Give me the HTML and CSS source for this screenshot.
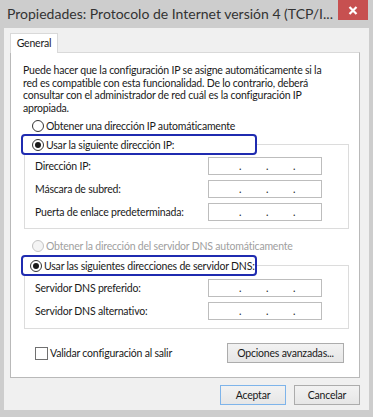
FILE: index.html
```html
<!DOCTYPE html>
<html lang="es">
<head>
    <meta charset="UTF-8">
    <title>Propiedades: Protocolo de Internet versión 4 (TCP/IPv4)</title>
    <link rel="stylesheet" href="styles.css">
</head>
<body>
    <div class="window">
        <div class="titlebar">
            <span class="title">Propiedades: Protocolo de Internet versión 4 (TCP/I...</span>
            <button class="close" title="Cerrar">
                <svg width="10" height="9" viewBox="0 0 10 9">
                    <path d="M1.5 1 L8.5 8 M8.5 1 L1.5 8" stroke="#fff" stroke-width="2.2" fill="none"/>
                </svg>
            </button>
        </div>

        <div class="client">
            <div class="tabs">
                <span class="tab">General</span>
            </div>

            <div class="panel">
                <p class="intro">
                    Puede hacer que la configuración IP se asigne automáticamente si la<br>
                    red es compatible con esta funcionalidad. De lo contrario, deberá<br>
                    consultar con el administrador de red cuál es la configuración IP<br>
                    apropiada.
                </p>

                <label class="option first"><span class="radio"></span>Obtener una dirección IP automáticamente</label>

                <fieldset class="group">
                    <legend class="option focus"><span class="radio checked"></span>Usar la siguiente dirección IP:</legend>
                    <div class="field">
                        <span>Dirección IP:</span>
                        <span class="ip"><i>.</i><i>.</i><i>.</i></span>
                    </div>
                    <div class="field">
                        <span>Máscara de subred:</span>
                        <span class="ip"><i>.</i><i>.</i><i>.</i></span>
                    </div>
                    <div class="field">
                        <span>Puerta de enlace predeterminada:</span>
                        <span class="ip"><i>.</i><i>.</i><i>.</i></span>
                    </div>
                </fieldset>

                <label class="option dns-auto disabled"><span class="radio"></span>Obtener la dirección del servidor DNS automáticamente</label>

                <fieldset class="group dns">
                    <legend class="option focus"><span class="radio checked"></span>Usar las siguientes direcciones de servidor DNS:</legend>
                    <div class="field">
                        <span>Servidor DNS preferido:</span>
                        <span class="ip"><i>.</i><i>.</i><i>.</i></span>
                    </div>
                    <div class="field">
                        <span>Servidor DNS alternativo:</span>
                        <span class="ip"><i>.</i><i>.</i><i>.</i></span>
                    </div>
                </fieldset>

                <div class="panel-footer">
                    <label class="check"><span class="box"></span>Validar configuración al salir</label>
                    <button class="btn advanced">Opciones avanzadas...</button>
                </div>
            </div>

            <div class="actions">
                <button class="btn default">Aceptar</button>
                <button class="btn">Cancelar</button>
            </div>
        </div>
    </div>
</body>
</html>
```

FILE: styles.css
```css
body {
    margin: 0;
    background: #cdcdcd;
    font-family: Lato, "Noto Sans", sans-serif;
    font-size: 10.5px;
    letter-spacing: -0.2px;
    color: #1a1a1a;
}

.window {
    width: 373px;
    height: 417px;
    box-sizing: border-box;
    padding: 0 4px 7px 4px;
    background: #cdcdcd;
}

.titlebar {
    display: flex;
    align-items: flex-start;
    height: 28px;
}

.title {
    padding-left: 3px;
    line-height: 27px;
    font-size: 14px;
    letter-spacing: 0;
    color: #333;
    white-space: nowrap;
    overflow: hidden;
}

.close {
    margin-left: auto;
    margin-right: 1px;
    width: 30px;
    height: 20px;
    border: none;
    padding: 0;
    background: #c75050;
    display: flex;
    align-items: center;
    justify-content: center;
    flex-shrink: 0;
}

.client {
    height: 382px;
    box-sizing: border-box;
    padding: 5px 9px 0 6px;
    background: #f0f0f0;
}

.tabs {
    display: flex;
    height: 19px;
}

.tab {
    position: relative;
    z-index: 1;
    width: 48px;
    height: 20px;
    box-sizing: border-box;
    border: 1px solid #d9d9d9;
    border-bottom: none;
    background: #fff;
    text-align: center;
    line-height: 18px;
}

.panel {
    width: 350px;
    height: 326px;
    box-sizing: border-box;
    border: 1px solid #b9b9b9;
    border-top-color: #d9d9d9;
    background: #fff;
}

.intro {
    margin: 11px 0 0 12px;
    line-height: 12.5px;
    white-space: nowrap;
}

.option {
    display: flex;
    align-items: center;
    height: 13px;
    white-space: nowrap;
}

.option.first {
    margin: 5px 0 0 21px;
}

.option.dns-auto {
    margin: 10px 0 0 21px;
}

.option.disabled {
    color: #a0a0a0;
}

.radio {
    width: 12px;
    height: 12px;
    box-sizing: border-box;
    border: 1px solid #333;
    border-radius: 50%;
    background: #fff;
    margin-right: 2px;
    display: inline-flex;
    align-items: center;
    justify-content: center;
    flex-shrink: 0;
}

.radio.checked::after {
    content: "";
    width: 6px;
    height: 6px;
    border-radius: 50%;
    background: #1a1a1a;
}

.disabled .radio {
    border-color: #c4c4c4;
    background: #f4f4f4;
}

.group {
    width: 325px;
    box-sizing: border-box;
    margin: 2px 0 0 13px;
    padding: 0 26px 7px 10px;
    border: 1px solid #dcdcdc;
}

.group.dns {
    margin-top: 3px;
    padding-bottom: 8px;
}

.focus {
    width: 236px;
    height: 21px;
    box-sizing: border-box;
    margin-left: -14px;
    padding: 0 0 0 9px;
    border: 2px solid #1f2bb0;
    border-radius: 4px;
    background: #fff;
}

.dns .focus {
    padding-left: 7px;
}

.field {
    display: flex;
    justify-content: space-between;
    align-items: center;
    height: 18px;
    margin-top: 5px;
    white-space: nowrap;
}

.focus + .field {
    margin-top: 2px;
}

.dns .focus + .field {
    margin-top: 3px;
}

.ip {
    width: 114px;
    height: 18px;
    box-sizing: border-box;
    border: 1px solid #bdbdbd;
    display: flex;
    gap: 24px;
    padding-left: 30px;
    line-height: 17px;
}

.ip i {
    font-style: normal;
    width: 3px;
}

.panel-footer {
    display: flex;
    justify-content: space-between;
    align-items: center;
    margin-top: 14px;
    padding: 0 15px 0 24px;
}

.check {
    display: flex;
    align-items: center;
}

.box {
    width: 13px;
    height: 13px;
    box-sizing: border-box;
    border: 1px solid #707070;
    background: #fff;
    margin-right: 2px;
}

.btn {
    height: 20px;
    border: 1px solid #acacac;
    background: linear-gradient(#f2f2f2, #e6e6e6);
    font-family: Lato, "Noto Sans", sans-serif;
    font-size: 10.5px;
    letter-spacing: -0.2px;
    color: #1a1a1a;
    padding: 0;
}

.advanced {
    width: 117px;
}

.actions {
    display: flex;
    justify-content: flex-end;
    gap: 8px;
    margin-top: 7px;
}

.actions .btn {
    width: 66px;
}

.btn.default {
    border-color: #7eb4ea;
}
```
